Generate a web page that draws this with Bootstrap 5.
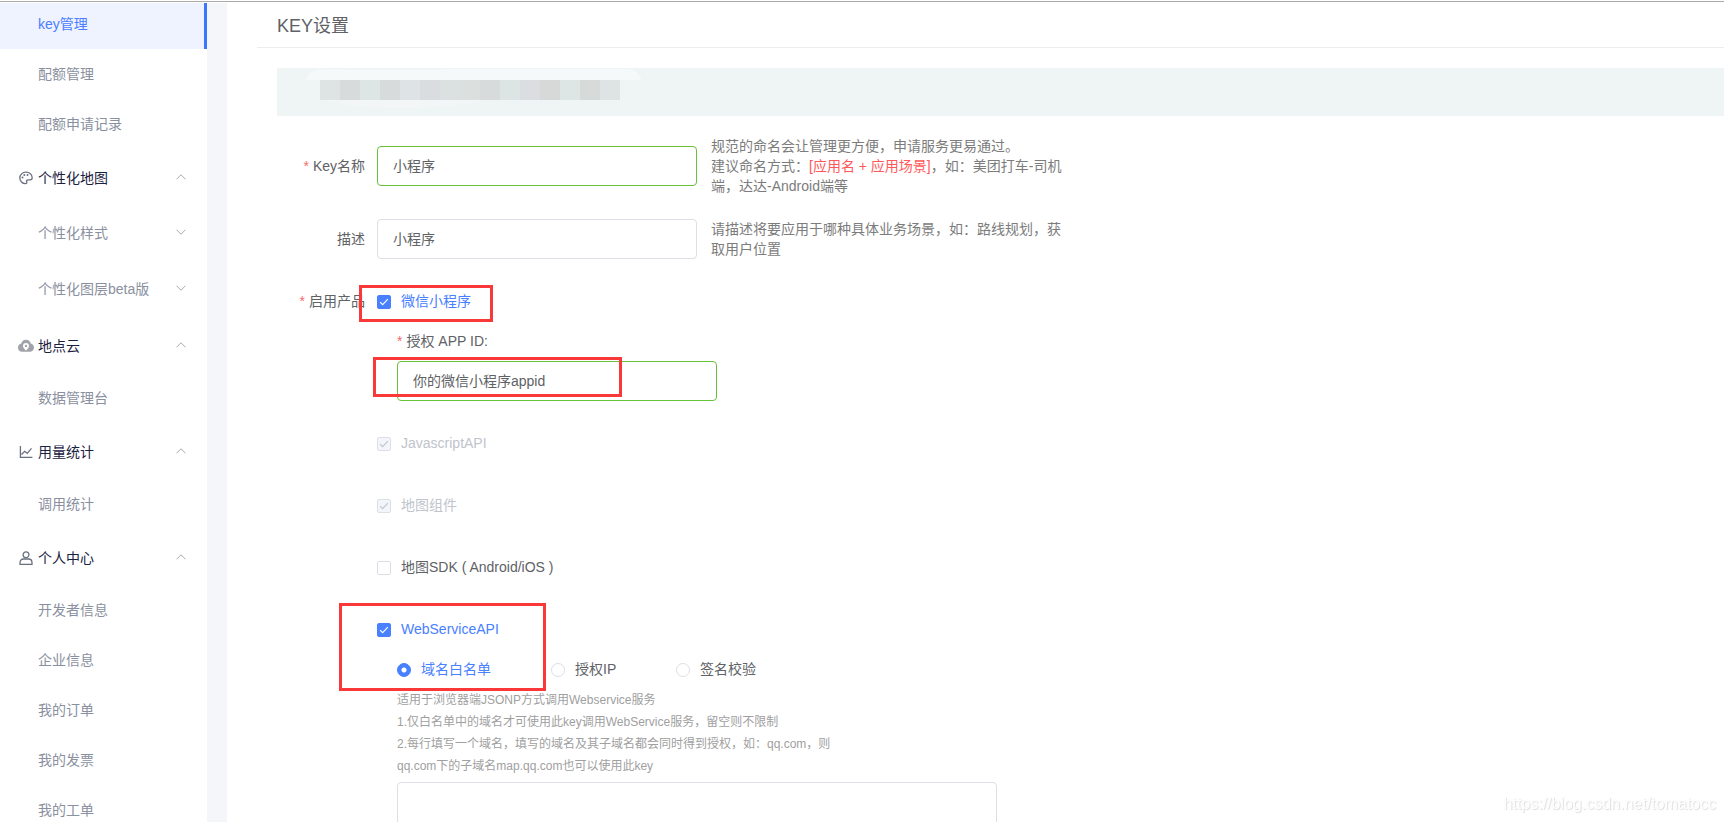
<!DOCTYPE html>
<html lang="zh-CN">
<head>
<meta charset="utf-8">
<meta name="viewport" content="width=device-width, initial-scale=1">
<title>KEY设置</title>
<link href="https://cdn.jsdelivr.net/npm/bootstrap@5.3.0/dist/css/bootstrap.min.css" rel="stylesheet">
<style>
  body { font-family: "Liberation Sans", "Noto Sans CJK SC", sans-serif; font-size: 14px; line-height: 20px; color: #606266; }
  .top-edge { height: 3px; background: #fff; z-index: 20; }
  .top-edge::after { content: ""; display: block; height: 2px; border-bottom: 1px solid #aaa; }

  /* side menu */
  .side-nav { width: 207px; }
  .side-nav ul { margin-top: -1px; }
  .side-nav a, .side-nav button { height: 50px; padding: 0 21px 0 38px; color: #8a90a0; text-decoration: none; background: none; border: 0; width: 100%; text-align: left; }
  .side-nav button { height: 56px; }
  .side-nav .group-head { color: #1b2140; padding: 2px 21px 0 17px; }
  .side-nav a.active { color: #4a7dff; background: #eff3ff; border-right: 3px solid #3b76ff; }
  .group-icon { width: 14px; height: 14px; margin: 0 5px 0 2px; color: #6b7080; }
  .chev { width: 10px; height: 6px; margin: 0 0 2px auto; color: #a6a9b0; }
  .gutter { width: 20px; background: #f5f6f9; }

  /* form */
  .main-pane { padding-left: 30px; }
  .page-title { height: 48px; padding: 6px 20px 0; border-bottom: 1px solid #ededed; font-size: 18px; }
  .form-body { padding: 20px 0 0 20px; }
  .notice { height: 48px; background: #eff5f5; margin-bottom: 20px; }
  .field-label { width: 100px; padding-right: 12px; text-align: right; line-height: 40px; white-space: nowrap; }
  .req::before { content: "*"; color: #f56c6c; margin-right: 4px; }
  .field-box { width: 320px; height: 40px; padding: 0 15px 2px; border: 1px solid #dcdfe6; border-radius: 4px; font-size: 14px; color: #606266; }
  .field-box.valid { border-color: #67c23a; }
  .hint { width: 354px; margin-left: 14px; color: #7c7c7c; }
  .hint em { color: #ff585b; font-style: normal; }
  .first-row { margin-bottom: 23px; }
  .next-row { margin-bottom: 22px; }
  .choice { height: 40px; }
  .choice label { padding-left: 10px; }
  .choice .form-check-input { width: 14px; height: 14px; margin: 2px 0 0; border: 1px solid #dcdfe6; flex: none; }
  .choice .form-check-input[type=checkbox] { border-radius: 2px; }
  .choice .form-check-input:checked { background-color: #4880ff; border-color: #4880ff; }
  .choice .form-check-input[type=checkbox]:checked { background-image: url("data:image/svg+xml,%3Csvg xmlns='http://www.w3.org/2000/svg' viewBox='0 0 14 14'%3E%3Cpath d='M2.500 7.200l2.900 3L11.500 3.700' fill='none' stroke='%23fff' stroke-width='1.300'/%3E%3C/svg%3E"); }
  .choice .form-check-input[type=radio]:checked { background-image: radial-gradient(circle, #fff 2px, transparent 3px); }
  .choice .form-check-input:checked + label { color: #4880ff; }
  .choice .form-check-input:disabled { opacity: 1; background-color: #f2f6fc; border-color: #dcdfe6; }
  .choice .form-check-input[type=checkbox]:disabled { background-image: url("data:image/svg+xml,%3Csvg xmlns='http://www.w3.org/2000/svg' viewBox='0 0 14 14'%3E%3Cpath d='M2.500 7.200l2.900 3L11.500 3.700' fill='none' stroke='%23c0c4cc' stroke-width='1.300'/%3E%3C/svg%3E"); }
  .choice .form-check-input:disabled + label { color: #c0c4cc; opacity: 1; }
  .sub-fields { padding-left: 20px; }
  .auth-mode { width: 125px; }
  .auth-mode.wide { width: 154px; }
  .note { width: 440px; font-size: 12px; line-height: 22px; color: #a0a0a0; margin-bottom: 5px; }
  .domain-list { width: 600px; height: 96px; border: 1px solid #dcdfe6; border-radius: 4px; resize: none; }

  /* red call-out frames drawn over the form */
  .callout { position: absolute; border: 3px solid #fb3838; pointer-events: none; z-index: 5; }
  .callout-product { left: -18px; top: 4px; width: 134px; height: 37px; }
  .callout-appid { left: -24px; top: -4px; width: 249px; height: 40px; }
  .callout-service { left: -38px; top: -6px; width: 207px; height: 88px; }
  .blog-mark { right: 8px; bottom: 8px; font-size: 16px; color: #fff; text-shadow: 1px 1px 1px #ddd, 0 0 1px #eee; }
</style>
</head>
<body>
<div class="top-edge position-fixed top-0 start-0 end-0"></div>
<div class="d-flex vh-100 overflow-hidden">

  <nav class="side-nav flex-shrink-0" aria-label="控制台">
    <ul class="list-unstyled mb-0">
      <li><a href="#" class="active d-flex align-items-center">key管理</a></li>
      <li><a href="#" class="d-flex align-items-center">配额管理</a></li>
      <li><a href="#" class="d-flex align-items-center">配额申请记录</a></li>
      <li><button type="button" class="group-head d-flex align-items-center">
        <svg class="group-icon" viewBox="0 0 14 14" fill="none" stroke="currentColor" stroke-width="1.3"><path d="M7 1.2C3.400 1.200.8 3.700.8 7c0 3 2.500 5.600 5.600 5.600 1.500 0 1.700-.9 1.300-1.700-.5-1.100.1-2.100 1.400-2.100h2c1.300 0 2.100-.7 2.100-2C13.200 3.600 10.400 1.200 7 1.200z"/><g fill="currentColor" stroke="none"><circle cx="3.500" cy="6.500" r="1"/><circle cx="5.300" cy="4" r="1"/><circle cx="8.500" cy="4" r="1"/></g></svg>
        个性化地图<svg class="chev" viewBox="0 0 10 6" fill="none" stroke="currentColor"><path d="M.5 5.300L5 .8l4.500 4.500"/></svg></button></li>
      <li><button type="button" class="d-flex align-items-center">个性化样式<svg class="chev" viewBox="0 0 10 6" fill="none" stroke="currentColor"><path d="M.5.700L5 5.200 9.500.7"/></svg></button></li>
      <li><button type="button" class="d-flex align-items-center">个性化图层beta版<svg class="chev" viewBox="0 0 10 6" fill="none" stroke="currentColor"><path d="M.5.700L5 5.200 9.500.7"/></svg></button></li>
      <li><button type="button" class="group-head d-flex align-items-center">
        <svg class="group-icon overflow-visible" viewBox="0 0 14 14"><path fill="#a0a3aa" d="M7 .8c2.500 0 4.200 1.500 4.700 3.700C13.700 5 15 6.500 15 8.600c0 2.500-1.800 4.200-4.300 4.200H3.200C.8 12.800-1 11.200-1 8.800c0-2 1.200-3.700 3.300-4.200C2.800 2.300 4.600.8 7 .8z"/><path fill="#fff" d="M7 4a3 3 0 0 1 3 3c0 1.600-1.500 3-3 4.500C5.500 10 4 8.600 4 7a3 3 0 0 1 3-3z"/><circle cx="7" cy="6.900" r="1.200" fill="#a0a3aa"/></svg>
        地点云<svg class="chev" viewBox="0 0 10 6" fill="none" stroke="currentColor"><path d="M.5 5.300L5 .8l4.500 4.500"/></svg></button></li>
      <li><a href="#" class="d-flex align-items-center">数据管理台</a></li>
      <li><button type="button" class="group-head d-flex align-items-center">
        <svg class="group-icon" viewBox="0 0 14 14" fill="none" stroke="currentColor" stroke-width="1.300"><path d="M1.400 1v11.300h12M2.500 9.500l3.200-3.200 2.500 2 4.300-5"/></svg>
        用量统计<svg class="chev" viewBox="0 0 10 6" fill="none" stroke="currentColor"><path d="M.5 5.300L5 .8l4.500 4.500"/></svg></button></li>
      <li><a href="#" class="d-flex align-items-center">调用统计</a></li>
      <li><button type="button" class="group-head d-flex align-items-center">
        <svg class="group-icon" viewBox="0 0 14 14" fill="none" stroke="currentColor" stroke-width="1.300"><circle cx="7" cy="3.800" r="2.900"/><path d="M1 13.300v-1.500c0-2.300 1.500-3.800 3.500-3.800h5c2 0 3.500 1.500 3.500 3.800v1.500z"/></svg>
        个人中心<svg class="chev" viewBox="0 0 10 6" fill="none" stroke="currentColor"><path d="M.5 5.300L5 .8l4.500 4.500"/></svg></button></li>
      <li><a href="#" class="d-flex align-items-center">开发者信息</a></li>
      <li><a href="#" class="d-flex align-items-center">企业信息</a></li>
      <li><a href="#" class="d-flex align-items-center">我的订单</a></li>
      <li><a href="#" class="d-flex align-items-center">我的发票</a></li>
      <li><a href="#" class="d-flex align-items-center">我的工单</a></li>
    </ul>
  </nav>
  <div class="gutter flex-shrink-0"></div>

  <main class="main-pane flex-grow-1">
    <h1 class="page-title d-flex align-items-center fw-normal mb-0">KEY设置</h1>
    <form class="form-body">
      <div class="notice">
        <svg width="400" height="48" viewBox="0 0 400 48" aria-hidden="true" class="d-block">
          <path fill="#f5f9fa" d="M29 12C31 5 37 1.500 44 1.500h24L72 2h90l6-1h182c7 0 13 5 14 11z"/>
          <path fill="#f2f6f7" d="M50 32h158c-30 7-60 8-88 8-26 0-50-2-70-8z"/>
          <g shape-rendering="crispEdges">
            <path fill="#dee3e3" d="M43 12h20v20H43z"/><path fill="#d7dbdb" d="M63 12h20v20H63z"/><path fill="#dee5e5" d="M83 12h20v20H83z"/><path fill="#d7dbdb" d="M103 12h20v20h-20z"/><path fill="#dee4e5" d="M123 12h20v20h-20z"/><path fill="#d9dddf" d="M143 12h20v20h-20z"/><path fill="#dbe1e1" d="M163 12h20v20h-20z"/><path fill="#dbdfde" d="M183 12h20v20h-20z"/><path fill="#d7dbdc" d="M203 12h20v20h-20z"/><path fill="#dde4e4" d="M223 12h20v20h-20z"/><path fill="#dadee0" d="M243 12h20v20h-20z"/><path fill="#d6d9d8" d="M263 12h20v20h-20z"/><path fill="#dde5e5" d="M283 12h20v20h-20z"/><path fill="#d6dad8" d="M303 12h20v20h-20z"/><path fill="#dee4e4" d="M323 12h20v20h-20z"/>
          </g>
        </svg>
      </div>

      <div class="first-row d-flex align-items-center">
        <label class="field-label req flex-shrink-0" for="keyName">Key名称</label>
        <input id="keyName" type="text" class="field-box valid" value="小程序">
        <div class="hint">规范的命名会让管理更方便，申请服务更易通过。<br>建议命名方式：<em>[应用名 + 应用场景]</em>，如：美团打车-司机端，达达-Android端等</div>
      </div>

      <div class="next-row d-flex align-items-center">
        <label class="field-label flex-shrink-0" for="keyDesc">描述</label>
        <input id="keyDesc" type="text" class="field-box" value="小程序">
        <div class="hint">请描述将要应用于哪种具体业务场景，如：路线规划，获取用户位置</div>
      </div>

      <div class="d-flex" role="group" aria-labelledby="productLabel">
        <div id="productLabel" class="field-label req flex-shrink-0">启用产品</div>
        <div>
          <div class="next-row">
            <div class="choice d-flex align-items-center position-relative">
              <input class="form-check-input" type="checkbox" id="pMini" checked><label for="pMini">微信小程序</label>
              <span class="callout callout-product"></span>
            </div>
            <div class="sub-fields">
              <label class="choice req d-flex align-items-center" for="appId">授权 APP ID:</label>
              <div class="position-relative">
                <input id="appId" type="text" class="field-box valid d-block" value="你的微信小程序appid">
                <span class="callout callout-appid"></span>
              </div>
            </div>
          </div>
          <div class="choice next-row d-flex align-items-center">
            <input class="form-check-input" type="checkbox" id="pJs" checked disabled><label for="pJs">JavascriptAPI</label>
          </div>
          <div class="choice next-row d-flex align-items-center">
            <input class="form-check-input" type="checkbox" id="pWidget" checked disabled><label for="pWidget">地图组件</label>
          </div>
          <div class="choice next-row d-flex align-items-center">
            <input class="form-check-input" type="checkbox" id="pSdk"><label for="pSdk">地图SDK ( Android/iOS )</label>
          </div>
          <div class="position-relative">
            <div class="choice d-flex align-items-center">
              <input class="form-check-input" type="checkbox" id="pWeb" checked><label for="pWeb">WebServiceAPI</label>
            </div>
            <div class="sub-fields">
              <div class="d-flex">
                <div class="choice auth-mode wide d-flex align-items-center"><input class="form-check-input" type="radio" name="auth" id="aDomain" checked><label for="aDomain">域名白名单</label></div>
                <div class="choice auth-mode d-flex align-items-center"><input class="form-check-input" type="radio" name="auth" id="aIp"><label for="aIp">授权IP</label></div>
                <div class="choice auth-mode d-flex align-items-center"><input class="form-check-input" type="radio" name="auth" id="aSign"><label for="aSign">签名校验</label></div>
              </div>
              <div class="note" id="domainNote">适用于浏览器端JSONP方式调用Webservice服务<br>1.仅白名单中的域名才可使用此key调用WebService服务，留空则不限制<br>2.每行填写一个域名，填写的域名及其子域名都会同时得到授权，如：qq.com，则qq.com下的子域名map.qq.com也可以使用此key</div>
              <textarea class="domain-list d-block" aria-labelledby="domainNote"></textarea>
            </div>
            <span class="callout callout-service"></span>
          </div>
        </div>
      </div>
    </form>
  </main>
</div>
<div class="blog-mark position-fixed">https://blog.csdn.net/tomatocc</div>
<script src="https://cdn.jsdelivr.net/npm/bootstrap@5.3.0/dist/js/bootstrap.bundle.min.js"></script>
</body>
</html>
